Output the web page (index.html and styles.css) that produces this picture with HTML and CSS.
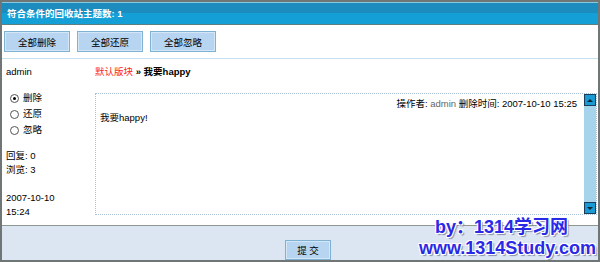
FILE: index.html
```html
<!DOCTYPE html>
<html lang="zh-CN">
<head>
    <meta charset="UTF-8">
    <title>回收站</title>
    <link rel="stylesheet" href="styles.css">
</head>
<body>
    <div class="frame">
        <div class="title-bar">符合条件的回收站主题数: 1</div>

        <div class="toolbar">
            <button class="btn">全部删除</button>
            <button class="btn">全部还原</button>
            <button class="btn">全部忽略</button>
        </div>

        <div class="main">
            <div class="side">
                <div class="author">admin</div>
                <ul class="choices">
                    <li><span class="radio checked"></span>删除</li>
                    <li><span class="radio"></span>还原</li>
                    <li><span class="radio"></span>忽略</li>
                </ul>
                <div class="stats">回复: 0<br>浏览: 3</div>
                <div class="stats date">2007-10-10<br>15:24</div>
            </div>

            <div class="post">
                <div class="crumb"><span class="forum">默认版块</span> <b>» 我要happy</b></div>
                <div class="post-box">
                    <div class="post-body">
                        <div class="meta">操作者: <span class="muted">admin</span> 删除时间: 2007-10-10 15:25</div>
                        <div class="text">我要happy!</div>
                    </div>
                    <div class="scrollbar">
                        <span class="arrow up"></span>
                        <span class="track"></span>
                        <span class="arrow down"></span>
                    </div>
                </div>
            </div>
        </div>

        <div class="footer">
            <button class="btn submit">提 交</button>
        </div>

        <!-- site stamp over the bottom right corner -->
        <div class="stamp">
            <div class="stamp-by">by：1314学习网</div>
            <div>www.1314Study.com</div>
        </div>
    </div>
</body>
</html>
```

FILE: styles.css
```css
body {
    margin: 0;
    font-family: "Liberation Sans", "Noto Sans CJK SC", sans-serif;
    font-size: 9.5px;
    color: #000;
    background-color: #fff;
}
.frame {
    position: relative;
    width: 600px;
    height: 262px;
    box-sizing: border-box;
    border: 2px solid #6f7675;
    display: flex;
    flex-direction: column;
    overflow: hidden;
}
.title-bar {
    height: 23px;
    box-sizing: border-box;
    line-height: 22px;
    padding-left: 5px;
    color: #fff;
    font-weight: bold;
    border-top: 1px solid #86c9e0;
    border-bottom: 1px solid #5d7f80;
    background: linear-gradient(#1b8cbd 0, #1b8cbd 50%, #14a0d6 50%, #14a0d6 100%);
}
.toolbar {
    height: 34px;
    box-sizing: border-box;
    padding: 6px 2px 0;
    display: flex;
    gap: 7px;
    border-bottom: 1px solid #c8dff0;
}
.btn {
    font-family: inherit;
    font-size: 9.5px;
    color: #000;
    width: 66px;
    height: 21px;
    padding: 0;
    background-color: #b7d5f1;
    border: 1px solid #7fb2d2;
    box-shadow: inset 0 0 0 1px #d3e7f7;
    cursor: pointer;
}
.main {
    height: 166px;
    display: flex;
    border-bottom: 1px solid #8c9890;
}
.side {
    width: 89px;
    padding: 6px 0 0 4px;
    line-height: 14px;
}
.choices {
    list-style: none;
    margin: 11px 0 0;
    padding: 0 0 0 4px;
    line-height: 16px;
}
.choices li {
    display: flex;
    align-items: center;
}
.radio {
    width: 7px;
    height: 7px;
    border: 1px solid #555;
    border-radius: 50%;
    margin-right: 4px;
    display: flex;
    align-items: center;
    justify-content: center;
}
.radio.checked::after {
    content: "";
    width: 3px;
    height: 3px;
    border-radius: 50%;
    background-color: #000;
}
.stats {
    margin-top: 11px;
}
.stats.date {
    margin-top: 14px;
}
.post {
    flex: 1;
    padding-top: 6px;
    line-height: 14px;
}
.crumb {
    margin-bottom: 14px;
}
.forum {
    color: #f22;
}
.post-box {
    height: 122px;
    margin-right: 1px;
    box-sizing: border-box;
    border: 1px dotted #aac0d6;
    display: flex;
}
.post-body {
    flex: 1;
    padding: 3px 7px 0 4px;
}
.meta {
    text-align: right;
}
.muted {
    color: #666;
}
.scrollbar {
    width: 12px;
    display: flex;
    flex-direction: column;
}
.track {
    flex: 1;
    background-color: #a6d4ea;
}
.arrow {
    height: 12px;
    box-sizing: border-box;
    border: 1px solid #1d3c5c;
    background-color: #1a9ad3;
    display: flex;
    align-items: center;
    justify-content: center;
}
.arrow::after {
    content: "";
    border-left: 3px solid transparent;
    border-right: 3px solid transparent;
}
.arrow.up::after {
    border-bottom: 3px solid #123;
}
.arrow.down::after {
    border-top: 3px solid #123;
}
.footer {
    flex: 1;
    background-color: #dce6f3;
    display: flex;
    justify-content: center;
    padding-top: 14px;
}
.btn.submit {
    width: 46px;
    height: 20px;
    margin-left: 16px;
}
.stamp {
    position: absolute;
    right: 2px;
    bottom: 1px;
    font-family: "Liberation Sans", "Noto Sans CJK SC", sans-serif;
    font-size: 18px;
    font-weight: bold;
    line-height: 21px;
    color: #2a2ae6;
    text-align: right;
    text-shadow: 1px 1px 0 #fff, -1px -1px 0 #fff, 1px -1px 0 #fff, -1px 1px 0 #fff, 2px 2px 1px #8890a8;
}
.stamp-by {
    margin-right: 28px;
}
```
